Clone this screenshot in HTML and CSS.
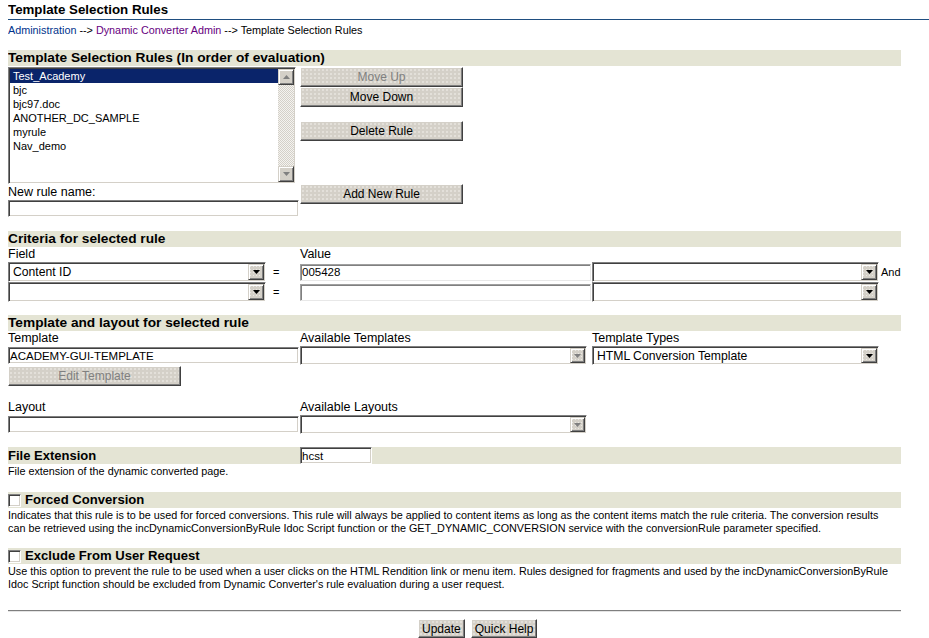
FILE: index.html
```html
<!DOCTYPE html>
<html>
<head>
    <meta charset="utf-8">
    <title>Template Selection Rules</title>
    <link rel="stylesheet" href="styles.css">
</head>
<body>
<div class="page">
    <h1 class="page-title">Template Selection Rules</h1>
    <div class="crumbs">
        <a class="crumb-link" href="#">Administration</a> --&gt;
        <a class="crumb-visited" href="#">Dynamic Converter Admin</a> --&gt; Template Selection Rules
    </div>

    <!-- rule list -->
    <div class="bar bar-first">Template Selection Rules (In order of evaluation)</div>
    <div class="rules">
        <div class="rules-left">
            <div class="listbox">
                <ul class="list-items">
                    <li class="selected">Test_Academy</li>
                    <li>bjc</li>
                    <li>bjc97.doc</li>
                    <li>ANOTHER_DC_SAMPLE</li>
                    <li>myrule</li>
                    <li>Nav_demo</li>
                </ul>
                <div class="vscroll">
                    <div class="sb-btn">
                        <svg width="7" height="4" viewBox="0 0 7 4"><polygon points="3.5,0 7,4 0,4" fill="#808080"/></svg>
                    </div>
                    <div class="sb-track"></div>
                    <div class="sb-btn">
                        <svg width="7" height="4" viewBox="0 0 7 4"><polygon points="0,0 7,0 3.5,4" fill="#808080"/></svg>
                    </div>
                </div>
            </div>
            <div class="label">New rule name:</div>
            <input class="text-input new-rule" type="text">
        </div>
        <div class="rules-buttons">
            <button class="btn btn-wide" disabled>Move Up</button>
            <button class="btn btn-wide">Move Down</button>
            <button class="btn btn-wide btn-delete">Delete Rule</button>
            <button class="btn btn-wide btn-add">Add New Rule</button>
        </div>
    </div>

    <!-- criteria -->
    <div class="bar bar-criteria">Criteria for selected rule</div>
    <div class="grid labels">
        <div>Field</div>
        <div>Value</div>
        <div></div>
    </div>
    <div class="grid crit-row">
        <div class="cell">
            <div class="combo combo-field">
                <span class="combo-text">Content ID</span>
                <span class="combo-btn"><svg width="7" height="4" viewBox="0 0 7 4"><polygon points="0,0 7,0 3.5,4" fill="#000"/></svg></span>
            </div>
            <span class="eq">=</span>
        </div>
        <div class="cell"><input class="text-input value-input" type="text" value="005428"></div>
        <div class="cell">
            <div class="combo combo-op">
                <span class="combo-text"></span>
                <span class="combo-btn"><svg width="7" height="4" viewBox="0 0 7 4"><polygon points="0,0 7,0 3.5,4" fill="#000"/></svg></span>
            </div>
            <span class="and">And</span>
        </div>
    </div>
    <div class="grid crit-row">
        <div class="cell">
            <div class="combo combo-field">
                <span class="combo-text"></span>
                <span class="combo-btn"><svg width="7" height="4" viewBox="0 0 7 4"><polygon points="0,0 7,0 3.5,4" fill="#000"/></svg></span>
            </div>
            <span class="eq">=</span>
        </div>
        <div class="cell"><input class="text-input value-input" type="text"></div>
        <div class="cell">
            <div class="combo combo-op">
                <span class="combo-text"></span>
                <span class="combo-btn"><svg width="7" height="4" viewBox="0 0 7 4"><polygon points="0,0 7,0 3.5,4" fill="#000"/></svg></span>
            </div>
        </div>
    </div>

    <!-- template and layout -->
    <div class="bar bar-template">Template and layout for selected rule</div>
    <div class="grid labels">
        <div>Template</div>
        <div>Available Templates</div>
        <div>Template Types</div>
    </div>
    <div class="grid tpl-row">
        <div class="cell"><input class="text-input tpl-input" type="text" value="ACADEMY-GUI-TEMPLATE"></div>
        <div class="cell">
            <div class="combo combo-avail combo-off">
                <span class="combo-text"></span>
                <span class="combo-btn"><svg width="7" height="4" viewBox="0 0 7 4"><polygon points="0,0 7,0 3.5,4" fill="#808080"/></svg></span>
            </div>
        </div>
        <div class="cell">
            <div class="combo combo-op combo-short">
                <span class="combo-text">HTML Conversion Template</span>
                <span class="combo-btn"><svg width="7" height="4" viewBox="0 0 7 4"><polygon points="0,0 7,0 3.5,4" fill="#000"/></svg></span>
            </div>
        </div>
    </div>
    <button class="btn btn-edit" disabled>Edit Template</button>

    <div class="grid labels labels-layout">
        <div>Layout</div>
        <div>Available Layouts</div>
        <div></div>
    </div>
    <div class="grid tpl-row">
        <div class="cell"><input class="text-input tpl-input" type="text"></div>
        <div class="cell">
            <div class="combo combo-avail combo-off">
                <span class="combo-text"></span>
                <span class="combo-btn"><svg width="7" height="4" viewBox="0 0 7 4"><polygon points="0,0 7,0 3.5,4" fill="#808080"/></svg></span>
            </div>
        </div>
        <div class="cell"></div>
    </div>

    <!-- options -->
    <div class="bar bar-ext grid">
        <div>File Extension</div>
        <div><input class="text-input ext-input" type="text" value="hcst"></div>
        <div></div>
    </div>
    <p class="desc desc-ext">File extension of the dynamic converted page.</p>

    <div class="bar bar-check bar-forced"><span class="check"></span>Forced Conversion</div>
    <p class="desc">Indicates that this rule is to be used for forced conversions. This rule will always be applied to content items as long as the content items match the rule criteria. The conversion results<br>can be retrieved using the incDynamicConversionByRule Idoc Script function or the GET_DYNAMIC_CONVERSION service with the conversionRule parameter specified.</p>

    <div class="bar bar-check bar-exclude"><span class="check"></span>Exclude From User Request</div>
    <p class="desc">Use this option to prevent the rule to be used when a user clicks on the HTML Rendition link or menu item. Rules designed for fragments and used by the incDynamicConversionByRule<br>Idoc Script function should be excluded from Dynamic Converter's rule evaluation during a user request.</p>

    <hr class="rule-line">
    <div class="actions">
        <button class="btn btn-small">Update</button>
        <button class="btn btn-small">Quick Help</button>
    </div>
</div>
</body>
</html>
```

FILE: styles.css
```css
body {
    margin: 0 0 0 8px;
    background: #fff;
    color: #000;
    font-family: "Liberation Sans", Arial, sans-serif;
    font-size: 10.8px;
    overflow: hidden;
}

.page {
    width: 921px;
}

.page-title {
    margin: 0;
    height: 19px;
    line-height: 19px;
    font-size: 13.3px;
    font-weight: bold;
    border-bottom: 1px solid #1f4e80;
}

.crumbs {
    margin-top: 4px;
    height: 13px;
    line-height: 13px;
}
.crumb-link {
    color: #00338c;
    text-decoration: none;
}
.crumb-visited {
    color: #660080;
    text-decoration: none;
}

/* section header bars */
.bar {
    width: 893px;
    height: 16px;
    line-height: 16px;
    background: #e4e4d4;
    font-size: 13.7px;
    font-weight: bold;
}
.bar-first { margin-top: 13px; }
.bar-criteria { margin-top: 14px; }
.bar-template { margin-top: 13px; }
.bar-ext {
    margin-top: 15px;
    height: 17px;
    line-height: 17px;
    font-size: 13px;
}
.bar-check {
    display: flex;
    align-items: center;
    font-size: 13.1px;
}
.bar-forced { margin-top: 14px; }
.bar-exclude { margin-top: 13px; }

.check {
    width: 13px;
    height: 13px;
    box-sizing: border-box;
    background: #fff;
    border: 1px solid;
    border-color: #808080 #fff #fff #808080;
    box-shadow: inset 1px 1px #404040, inset -1px -1px #d4d0c8;
    margin-right: 4px;
}

/* rules list */
.rules {
    display: flex;
}
.rules-left {
    width: 292px;
    padding-top: 1px;
}
.listbox {
    width: 288px;
    height: 117px;
    box-sizing: border-box;
    display: flex;
    border: 1px solid;
    border-color: #808080 #fff #fff #808080;
    box-shadow: inset 1px 1px #404040, inset -1px -1px #d4d0c8;
    padding: 1px;
}
.list-items {
    flex: 1;
    list-style: none;
    margin: 0;
    padding: 0;
    font-size: 11px;
}
.list-items li {
    height: 14px;
    line-height: 14px;
    padding-left: 3px;
}
.list-items .selected {
    background: #0a246a;
    color: #fff;
}
.vscroll {
    width: 16px;
    display: flex;
    flex-direction: column;
}
.sb-btn {
    height: 16px;
    box-sizing: border-box;
    display: flex;
    align-items: center;
    justify-content: center;
    background: #d4d0c8;
    border: 1px solid;
    border-color: #d4d0c8 #404040 #404040 #d4d0c8;
    box-shadow: inset 1px 1px #fff, inset -1px -1px #808080;
}
.sb-track {
    flex: 1;
    background: repeating-conic-gradient(#d4d0c8 0 25%, #f4f3f0 0 50%) 0 0 / 2px 2px;
}

.label {
    height: 14px;
    line-height: 14px;
    margin-top: 1px;
    font-size: 12.5px;
}

.text-input {
    display: block;
    box-sizing: border-box;
    margin: 0;
    padding: 0 0 0 1px;
    font-family: inherit;
    font-size: 11.5px;
    color: #000;
    background: #fff;
    border: 1px solid;
    border-color: #808080 #fff #fff #808080;
    box-shadow: inset 1px 1px #404040, inset -1px -1px #d4d0c8;
    outline: none;
}
.new-rule {
    width: 291px;
    height: 17px;
    margin-top: 1px;
}

.rules-buttons {
    display: flex;
    flex-direction: column;
    align-items: flex-start;
    padding-top: 1px;
}

/* buttons */
.btn {
    box-sizing: border-box;
    margin: 0;
    padding: 0;
    font-family: inherit;
    font-size: 12px;
    color: #000;
    background-color: #d4d0c8;
    background-image: radial-gradient(circle, #ebe9e4 0.6px, transparent 0.9px);
    background-size: 4px 4px;
    border: 1px solid;
    border-color: #fff #404040 #404040 #fff;
    box-shadow: inset -1px -1px #808080;
    cursor: default;
}
.btn:disabled {
    color: #808080;
}
.btn-wide {
    width: 163px;
    height: 20px;
}
.btn-delete { margin-top: 14px; }
.btn-add { margin-top: 43px; }
.btn-edit {
    display: block;
    width: 173px;
    height: 20px;
    margin-top: 3px;
}
.btn-small {
    height: 19px;
    padding: 0 3px;
}

/* three column rows */
.grid {
    display: grid;
    grid-template-columns: 292px 292px 1fr;
}
.labels {
    height: 14px;
    line-height: 14px;
    font-size: 12.5px;
}
.labels-layout {
    margin-top: 14px;
}
.cell {
    display: flex;
    align-items: center;
}
.crit-row {
    height: 20px;
}
.labels + .crit-row {
    margin-top: 1px;
}
.tpl-row {
    height: 17px;
    margin-top: 1px;
}

.combo {
    height: 100%;
    box-sizing: border-box;
    display: flex;
    align-items: center;
    background: #fff;
    border: 1px solid;
    border-color: #808080 #fff #fff #808080;
    box-shadow: inset 1px 1px #404040, inset -1px -1px #d4d0c8;
    padding: 1px;
}
.combo-text {
    flex: 1;
    padding-left: 3px;
    font-size: 12.2px;
    white-space: nowrap;
}
.combo-btn {
    width: 16px;
    height: 100%;
    box-sizing: border-box;
    display: flex;
    align-items: center;
    justify-content: center;
    background-color: #d4d0c8;
    background-image: radial-gradient(circle, #ebe9e4 0.6px, transparent 0.9px);
    background-size: 3px 3px;
    border: 1px solid;
    border-color: #d4d0c8 #404040 #404040 #d4d0c8;
    box-shadow: inset 1px 1px #fff, inset -1px -1px #808080;
}
.combo-field { width: 258px; }
.combo-op { width: 287px; }
.combo-avail { width: 287px; }
.combo-off .combo-btn {
    width: 15px;
    height: 15px;
}
.eq {
    margin-left: 7px;
    font-size: 11px;
}
.and {
    margin-left: 2px;
    font-size: 11px;
}

.value-input {
    width: 291px;
    height: 17px;
    border-color: #a0a0a0 #e8e8e8 #e8e8e8 #a0a0a0;
    box-shadow: inset 1px 1px #808080;
}
.tpl-input {
    width: 291px;
    height: 17px;
}
.ext-input {
    width: 72px;
    height: 17px;
    font-weight: normal;
}

.desc {
    margin: 1px 0 0;
    line-height: 13px;
}

.rule-line {
    width: 893px;
    margin: 19px 0 0;
    height: 0;
    border: 0;
    border-top: 1px solid #7f7f7f;
    border-bottom: 1px solid #e4e4e4;
}

.actions {
    display: flex;
    gap: 6px;
    margin-top: 7px;
    padding-left: 410px;
}
```
